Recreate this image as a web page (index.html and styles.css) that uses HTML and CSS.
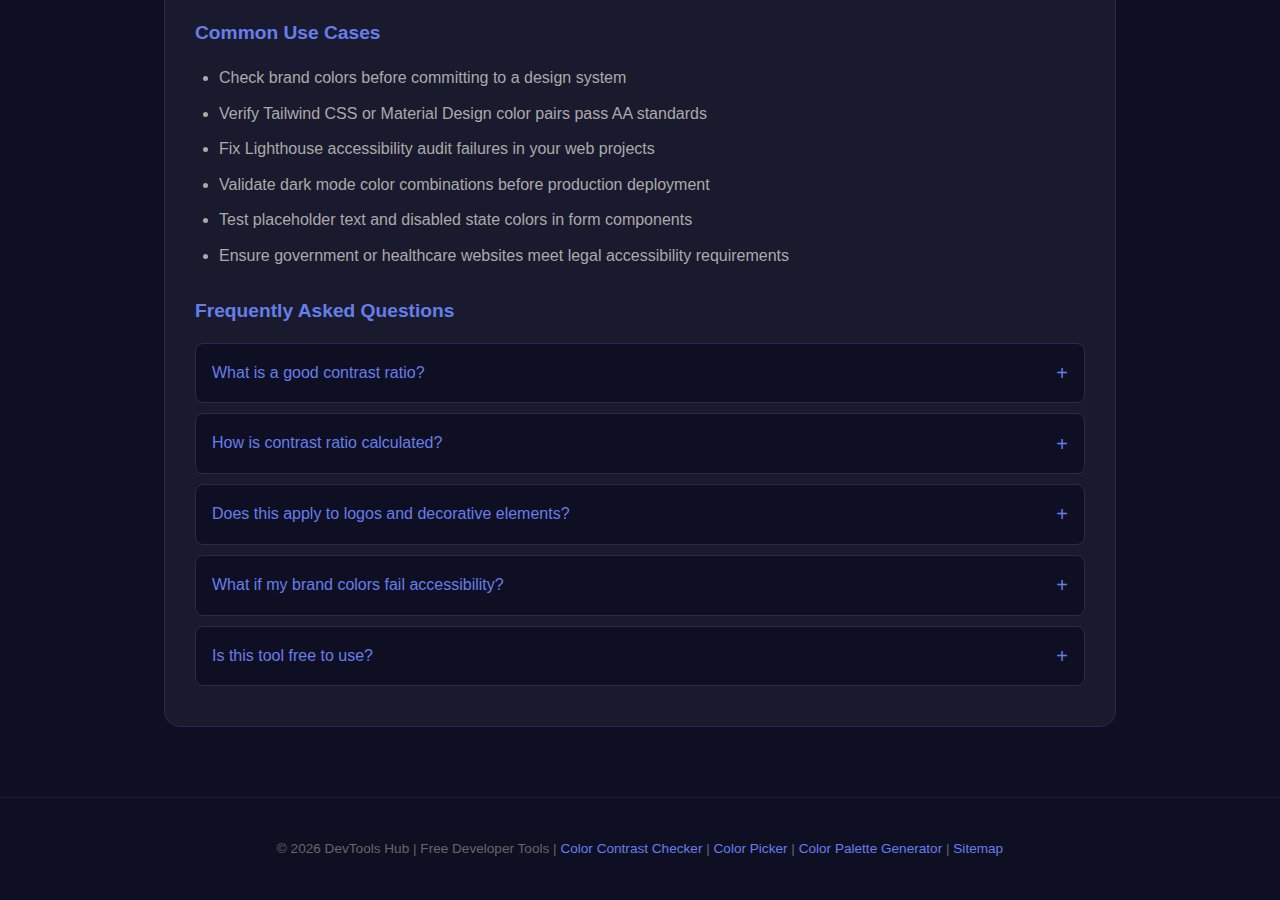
FILE: index.html
```html
<!DOCTYPE html>
<html lang="en">
<head>
    <meta charset="UTF-8">
    <meta name="viewport" content="width=device-width, initial-scale=1.0">
    <title>Color Contrast Checker - DevTools Hub</title>
    <link rel="stylesheet" href="styles.css">
</head>
<body>

<main class="container">
    <section class="content-card">
        <h2>Common Use Cases</h2>
        <ul class="use-cases">
            <li>Check brand colors before committing to a design system</li>
            <li>Verify Tailwind CSS or Material Design color pairs pass AA standards</li>
            <li>Fix Lighthouse accessibility audit failures in your web projects</li>
            <li>Validate dark mode color combinations before production deployment</li>
            <li>Test placeholder text and disabled state colors in form components</li>
            <li>Ensure government or healthcare websites meet legal accessibility requirements</li>
        </ul>

        <h2 class="faq-title">Frequently Asked Questions</h2>
        <div class="faq-item">
            <button class="faq-question">What is a good contrast ratio?<span class="faq-toggle">+</span></button>
        </div>
        <div class="faq-item">
            <button class="faq-question">How is contrast ratio calculated?<span class="faq-toggle">+</span></button>
        </div>
        <div class="faq-item">
            <button class="faq-question">Does this apply to logos and decorative elements?<span class="faq-toggle">+</span></button>
        </div>
        <div class="faq-item">
            <button class="faq-question">What if my brand colors fail accessibility?<span class="faq-toggle">+</span></button>
        </div>
        <div class="faq-item">
            <button class="faq-question">Is this tool free to use?<span class="faq-toggle">+</span></button>
        </div>
    </section>
</main>

<footer class="site-footer">
    &copy; 2026 DevTools Hub | Free Developer Tools |
    <a href="#">Color Contrast Checker</a> |
    <a href="#">Color Picker</a> |
    <a href="#">Color Palette Generator</a> |
    <a href="#">Sitemap</a>
</footer>

</body>
</html>
```

FILE: styles.css
```css
* {
    box-sizing: border-box;
}
body {
    font-family: 'Liberation Sans', Arial, Helvetica, sans-serif;
    background-color: #0f0f23;
    color: #aaa;
    margin: 0;
}
.container {
    max-width: 952px;
    margin: -41px auto 0;
    padding-bottom: 70px;
}
.content-card {
    background-color: #1a1a2e;
    border: 1px solid #2a2a4a;
    border-radius: 16px;
    padding: 30px;
}
.content-card h2 {
    color: #667eea;
    font-size: 1.2rem;
    line-height: 25px;
    margin: 30px 0 20px;
}
.content-card .faq-title {
    margin-top: 29px;
}
.use-cases {
    margin: 0;
    padding-left: 24px;
}
.use-cases li {
    font-size: 16px;
    line-height: 1.6;
    margin-bottom: 10px;
    color: #aaa;
}
.faq-item {
    background-color: #0f0f23;
    border: 1px solid #2a2a4a;
    border-radius: 8px;
    margin-bottom: 10px;
}
.faq-question {
    display: flex;
    justify-content: space-between;
    align-items: center;
    width: 100%;
    background: none;
    border: none;
    padding: 20px 16px;
    font-family: inherit;
    font-size: 16px;
    line-height: 18.75px;
    color: #667eea;
    text-align: left;
    cursor: pointer;
}
.faq-toggle {
    font-size: 20px;
    line-height: 18px;
    color: #667eea;
}
.site-footer {
    border-top: 1px solid #1f1f38;
    padding: 41px 20px 41px;
    text-align: center;
    font-size: 0.85rem;
    line-height: 20px;
    color: #666;
}
.site-footer a {
    color: #667eea;
    text-decoration: none;
}
```
